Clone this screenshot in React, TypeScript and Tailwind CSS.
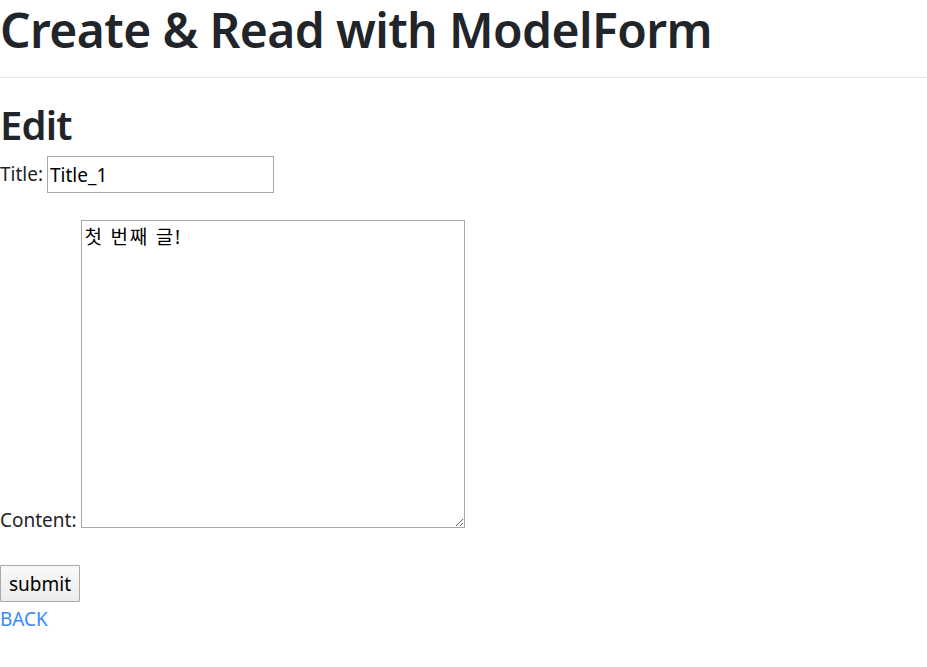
import React from "react";

export default function App() {
  return (
    <div
      className="bg-white text-[#212529] min-h-[667px]"
      style={{ fontFamily: '"Noto Sans", "Noto Sans CJK KR", sans-serif' }}
    >
      <h1 className="m-0 text-[48px] font-semibold leading-[60px] tracking-[-0.6px] whitespace-nowrap">
        Create &amp; Read with ModelForm
      </h1>
      <hr className="mt-[17px] mb-0 border-0 border-t border-[#e5e5e5]" />
      <h2 className="mt-[23px] m-0 text-[40px] font-semibold leading-[48px] tracking-[-0.8px]">Edit</h2>
      <div className="mt-[7px] flex items-center text-[19px]">
        <label htmlFor="title" className="mr-[4px]">Title:</label>
        <input
          id="title"
          defaultValue="Title_1"
          className="w-[227px] h-[37px] border border-[#a9a9a9] px-[2px] text-[19px] text-black outline-none"
          style={{ fontFamily: '"Noto Sans", "Noto Sans CJK KR", sans-serif' }}
        />
      </div>
      <div className="mt-[27px] flex items-end text-[19px]">
        <label htmlFor="content" className="mr-[4px] leading-[24px] mb-[-4px]">Content:</label>
        <textarea
          id="content"
          defaultValue="첫 번째 글!"
          className="w-[384px] h-[308px] border border-[#a9a9a9] px-[3px] py-[2px] text-[19px] tracking-[1.8px] leading-[28px] text-black outline-none resize"
          style={{ fontFamily: '"Noto Sans", "Noto Sans CJK KR", sans-serif' }}
        />
      </div>
      <div className="mt-[37px]">
        <button className="h-[37px] px-[8px] border border-[#a9a9a9] bg-[linear-gradient(#f9f9f9,#ececec)] text-[19px] text-black leading-[24px] rounded-[1px]">
          submit
        </button>
      </div>
      <a href="#" className="block mt-[4px] text-[19px] leading-[26px] text-[#3a88fe] no-underline">
        BACK
      </a>
    </div>
  );
}
